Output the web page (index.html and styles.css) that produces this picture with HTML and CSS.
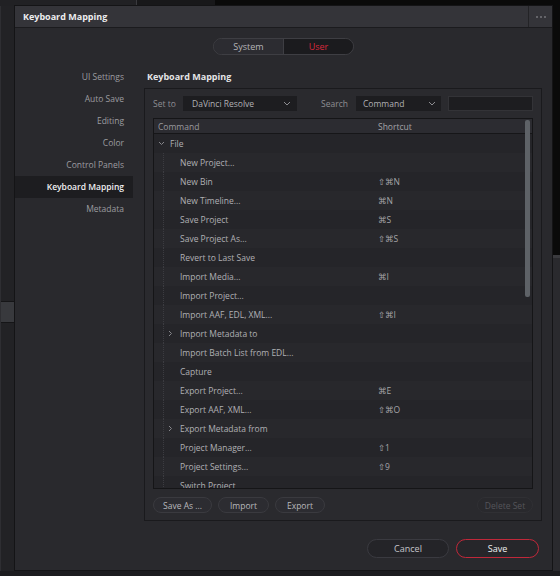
FILE: index.html
```html
<!DOCTYPE html>
<html>
<head>
<meta charset="utf-8">
<link rel="stylesheet" href="styles.css">
</head>
<body>
<div class="bg-top-left"></div>
<div class="bg-top-mid"></div>
<div class="bg-left"><div class="bg-left-tab"></div></div>
<div class="bg-right"></div>
<div class="bg-bottom"></div>

<div class="dialog">
  <div class="titlebar">
    <div class="title">Keyboard Mapping</div>
    <div class="more"><span></span><span></span><span></span></div>
  </div>

  <div class="seg-row">
    <div class="seg">
      <div class="seg-item">System</div>
      <div class="seg-item active">User</div>
    </div>
  </div>

  <div class="content">
    <nav class="sidebar">
      <div class="nav-item">UI Settings</div>
      <div class="nav-item">Auto Save</div>
      <div class="nav-item">Editing</div>
      <div class="nav-item">Color</div>
      <div class="nav-item">Control Panels</div>
      <div class="nav-item active">Keyboard Mapping</div>
      <div class="nav-item">Metadata</div>
    </nav>

    <main class="main">
      <div class="heading">Keyboard Mapping</div>
      <div class="panel">
        <div class="toolbar">
          <span class="lbl lbl-set">Set to</span>
          <div class="dropdown dd-set"><span>DaVinci Resolve</span><svg class="dd-chev" viewBox="0 0 8 5" width="8" height="5"><polyline points="1,1 4,4 7,1"/></svg></div>
          <span class="spacer"></span>
          <span class="lbl lbl-search">Search</span>
          <div class="dropdown dd-search"><span>Command</span><svg class="dd-chev" viewBox="0 0 8 5" width="8" height="5"><polyline points="1,1 4,4 7,1"/></svg></div>
          <div class="search-input"></div>
        </div>

        <div class="table">
          <div class="thead">
            <div class="col-cmd">Command</div>
            <div class="col-key">Shortcut</div>
          </div>
          <div class="tbody">
            <div class="row group"><svg class="chev" viewBox="0 0 7 5" width="7" height="5"><polyline points="1,1 3.5,3.5 6,1"/></svg><span class="col-cmd">File</span></div>
            <div class="row child"><span class="col-cmd">New Project...</span><span class="col-key"></span></div>
            <div class="row child"><span class="col-cmd">New Bin</span><span class="col-key">⇧⌘N</span></div>
            <div class="row child"><span class="col-cmd">New Timeline...</span><span class="col-key">⌘N</span></div>
            <div class="row child"><span class="col-cmd">Save Project</span><span class="col-key">⌘S</span></div>
            <div class="row child"><span class="col-cmd">Save Project As...</span><span class="col-key">⇧⌘S</span></div>
            <div class="row child"><span class="col-cmd">Revert to Last Save</span><span class="col-key"></span></div>
            <div class="row child"><span class="col-cmd">Import Media...</span><span class="col-key">⌘I</span></div>
            <div class="row child"><span class="col-cmd">Import Project...</span><span class="col-key"></span></div>
            <div class="row child"><span class="col-cmd">Import AAF, EDL, XML...</span><span class="col-key">⇧⌘I</span></div>
            <div class="row child sub"><svg class="chev-r" viewBox="0 0 5 7" width="5" height="7"><polyline points="1,1 3.5,3.5 1,6"/></svg><span class="col-cmd">Import Metadata to</span><span class="col-key"></span></div>
            <div class="row child"><span class="col-cmd">Import Batch List from EDL...</span><span class="col-key"></span></div>
            <div class="row child"><span class="col-cmd">Capture</span><span class="col-key"></span></div>
            <div class="row child"><span class="col-cmd">Export Project...</span><span class="col-key">⌘E</span></div>
            <div class="row child"><span class="col-cmd">Export AAF, XML...</span><span class="col-key">⇧⌘O</span></div>
            <div class="row child sub"><svg class="chev-r" viewBox="0 0 5 7" width="5" height="7"><polyline points="1,1 3.5,3.5 1,6"/></svg><span class="col-cmd">Export Metadata from</span><span class="col-key"></span></div>
            <div class="row child"><span class="col-cmd">Project Manager...</span><span class="col-key">⇧1</span></div>
            <div class="row child"><span class="col-cmd">Project Settings...</span><span class="col-key">⇧9</span></div>
            <div class="row child"><span class="col-cmd">Switch Project</span><span class="col-key"></span></div>
          </div>
          <div class="scrollbar"></div>
        </div>

        <div class="panel-buttons">
          <button class="pill btn-saveas">Save As ...</button>
          <button class="pill btn-import">Import</button>
          <button class="pill btn-export">Export</button>
          <span class="spacer"></span>
          <button class="pill btn-delete">Delete Set</button>
        </div>
      </div>
    </main>
  </div>

  <div class="footer">
    <button class="pill btn-cancel">Cancel</button>
    <button class="pill btn-save">Save</button>
  </div>
</div>
</body>
</html>
```

FILE: styles.css
```css
* { box-sizing: border-box; }
html, body {
  margin: 0;
  padding: 0;
}
body {
  width: 560px;
  height: 576px;
  background: #0a0a0a;
  position: relative;
  overflow: hidden;
  font-family: "Open Sans", "DejaVu Sans", sans-serif;
  font-size: 8.5px;
  color: #a8a8ac;
}

/* backdrop app windows */
.bg-top-left {
  position: absolute; left: 0; top: 0; width: 137px; height: 8px;
  background: #212124; border-right: 1px solid #3a3a3e;
}
.bg-top-mid {
  position: absolute; left: 137px; top: 0; width: 78px; height: 8px;
  background: #18181a;
}
.bg-left {
  position: absolute; left: 0; top: 6px; width: 15px; height: 570px;
  background: #222225; border-left: 1px solid #2e2e32;
}
.bg-left-tab {
  position: absolute; left: 0; top: 295px; width: 14px; height: 22px;
  background: #38393d; border-top: 1px solid #151517; border-bottom: 1px solid #151517;
}
.bg-right {
  position: absolute; right: 0; top: 255px; width: 8px; height: 321px;
  background: #2a2a2e; border-top: 3px solid #3a3a3e;
}
.bg-bottom {
  position: absolute; left: 0; top: 571px; width: 560px; height: 5px;
  background: #1c1c1f;
}

/* dialog window */
.dialog {
  position: absolute;
  left: 14px; top: 5px;
  width: 539px; height: 566px;
  background: #29292d;
  border: 1px solid #141416;
  display: flex;
  flex-direction: column;
}
.titlebar {
  height: 22px;
  flex: none;
  display: flex;
  align-items: center;
  background: #343439;
  border-bottom: 1px solid #1b1b1e;
}
.title {
  flex: 1;
  padding-left: 8px;
  font-size: 9px;
  font-weight: 700;
  color: #ececee;
}
.more {
  width: 24px;
  height: 100%;
  border-left: 1px solid #232326;
  display: flex;
  align-items: center;
  justify-content: center;
  gap: 2px;
}
.more span {
  width: 2px; height: 2px; border-radius: 1px; background: #75757a;
}

/* segmented control */
.seg-row {
  flex: none;
  display: flex;
  justify-content: center;
  margin-top: 10px;
}
.seg {
  display: flex;
  height: 17px;
  width: 141px;
  border: 1px solid #3e3e43;
  border-radius: 9px;
  overflow: hidden;
}
.seg-item {
  flex: 1;
  display: flex;
  align-items: center;
  justify-content: center;
  font-size: 9px;
  color: #b4b4b8;
  background: #2c2c31;
}
.seg-item.active {
  background: #1b1b1e;
  color: #d8283b;
  border-left: 1px solid #3e3e43;
}

/* content */
.content {
  flex: none;
  display: flex;
  margin-top: 11px;
}
.sidebar {
  width: 118px;
  flex: none;
  display: flex;
  flex-direction: column;
}
.nav-item {
  height: 22px;
  line-height: 22px;
  text-align: right;
  padding-right: 9px;
  color: #9c9ca0;
}
.nav-item.active {
  background: #1d1d20;
  color: #f0f0f2;
  font-weight: 600;
}
.main {
  width: 398px;
  margin-left: 11px;
  display: flex;
  flex-direction: column;
}
.heading {
  height: 22px;
  line-height: 22px;
  padding-left: 3px;
  font-size: 9px;
  font-weight: 700;
  color: #e4e4e6;
}
.panel {
  height: 433px;
  border: 1px solid #1a1a1d;
  background: #2a2a2e;
  padding: 7px 8px 7px 8px;
  display: flex;
  flex-direction: column;
}
.toolbar {
  display: flex;
  align-items: center;
  height: 15px;
  flex: none;
}
.lbl { color: #8e8e93; }
.lbl-set { width: 30px; }
.lbl-search { width: 35px; }
.spacer { flex: 1; }
.dropdown {
  height: 15px;
  background: #1d1d20;
  display: flex;
  align-items: center;
  justify-content: space-between;
  color: #b0b0b4;
}
.dd-set { width: 114px; padding: 0 6px 0 9px; }
.dd-search { width: 85px; padding: 0 5px 0 7px; }
.dd-chev { fill: none; stroke: #8c8c90; stroke-width: 1; }
.search-input {
  width: 85px;
  height: 15px;
  margin-left: 7px;
  background: #1d1d20;
  border: 1px solid #333337;
}

/* table */
.table {
  margin-top: 7px;
  height: 371px;
  flex: none;
  position: relative;
  background: #252529;
  border: 1px solid #151517;
  overflow: hidden;
}
.thead {
  height: 15px;
  display: flex;
  align-items: center;
  background: #2c2c31;
  border-bottom: 1px solid #161618;
  color: #9a9a9f;
}
.thead .col-cmd { width: 224px; padding-left: 4px; }
.tbody { display: flex; flex-direction: column; }
.row {
  height: 19px;
  flex: none;
  display: flex;
  align-items: center;
  position: relative;
  color: #b0b0b4;
}
.row:nth-child(even) { background: #28282c; }
.row:nth-child(odd) { background: #252529; }
.row.group { padding-left: 4px; }
.row.group .col-cmd { margin-left: 5px; }
.chev { fill: none; stroke: #85858a; stroke-width: 1; }
.chev-r { fill: none; stroke: #85858a; stroke-width: 1; position: absolute; left: 14px; top: 6px; }
.row.child { padding-left: 26px; }
.row.child::before {
  content: "";
  position: absolute;
  left: 9px; top: 0; bottom: 0;
  border-left: 1px dotted #3c3c41;
}
.row.child .col-cmd { width: 198px; }
.col-key { color: #a4a4a8; }
.scrollbar {
  position: absolute;
  right: 2px;
  top: 1px;
  width: 5px;
  height: 177px;
  border-radius: 2px;
  background: #5e6267;
}

/* pill buttons */
.pill {
  font-family: "Open Sans", "DejaVu Sans", sans-serif;
  font-size: 8.5px;
  color: #b8b8bc;
  background: #2c2c31;
  border: 1px solid #3a3a3f;
  border-radius: 9px;
  padding: 0;
  height: 16px;
  cursor: default;
}
.panel-buttons {
  display: flex;
  align-items: center;
  margin-top: 8px;
  gap: 6px;
}
.btn-saveas { width: 59px; }
.btn-import { width: 51px; }
.btn-export { width: 50px; }
.btn-delete { width: 56px; color: #55555a; border-color: #303034; background: #29292d; }

.footer {
  display: flex;
  justify-content: flex-end;
  gap: 7px;
  margin-top: 18px;
  padding-right: 13px;
}
.btn-cancel {
  width: 82px; height: 19px; border-radius: 10px;
  background: #242428; border-color: #3a3a40; color: #c4c4c8;
  font-size: 9px;
}
.btn-save {
  width: 83px; height: 19px; border-radius: 10px;
  background: #26262a; border-color: #c0283a; color: #f0f0f2;
  font-size: 9px;
}
```
